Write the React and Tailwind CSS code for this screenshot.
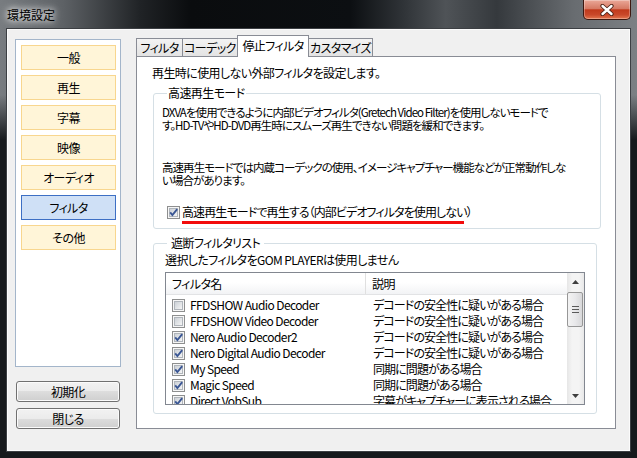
import React from 'react';

const font = "font-['Noto_Sans_CJK_JP','Noto_Sans',sans-serif] [font-feature-settings:'palt']";

function CheckBox({ checked }) {
  return (
    <svg width="13" height="13" viewBox="0 0 13 13" className="shrink-0">
      <defs>
        <linearGradient id="cbfill" x1="0" y1="0" x2="1" y2="1">
          <stop offset="0" stopColor="#c9ced4" />
          <stop offset="1" stopColor="#f7f7f7" />
        </linearGradient>
      </defs>
      <rect x="0.5" y="0.5" width="12" height="12" fill="#f6f6f6" stroke="#8e8f8f" />
      <rect x="2.5" y="2.5" width="8" height="8" fill="url(#cbfill)" stroke="#b0b5bb" />
      {checked && (
        <path d="M3.2 6.4 L5.4 9 L10.2 3.2" fill="none" stroke="#3a5694" strokeWidth="1.9" />
      )}
    </svg>
  );
}

const sideItems = ['一般', '再生', '字幕', '映像', 'オーディオ', 'フィルタ', 'その他'];

const filters = [
  { on: false, name: 'FFDSHOW Audio Decoder', desc: 'デコードの安全性に疑いがある場合' },
  { on: false, name: 'FFDSHOW Video Decoder', desc: 'デコードの安全性に疑いがある場合' },
  { on: true, name: 'Nero Audio Decoder2', desc: 'デコードの安全性に疑いがある場合' },
  { on: true, name: 'Nero Digital Audio Decoder', desc: 'デコードの安全性に疑いがある場合' },
  { on: true, name: 'My Speed', desc: '同期に問題がある場合' },
  { on: true, name: 'Magic Speed', desc: '同期に問題がある場合' },
  { on: true, name: 'Direct VobSub', desc: '字幕がキャプチャーに表示される場合' },
];

export default function App() {
  return (
    <div className={`w-[637px] h-[458px] flex flex-col overflow-hidden text-[12px] leading-[16px] tracking-[-0.6px] text-black ${font} bg-[linear-gradient(to_bottom,rgba(0,0,0,0)_0px,rgba(0,0,0,0)_95px,#16191c_140px),linear-gradient(to_right,#787c80_0%,#5d6165_10%,#202326_22%,#0a0c0e_30%,#0c0f12_55%,#2e3236_63%,#4f5357_70%,#35393d_78%,#686c70_90%,#7c8084_100%)]`}>
      {/* Title bar */}
      <div className="h-[29px] flex items-start shrink-0">
        <div className="pl-[7px] pt-[7px] text-[12px] leading-[16px] tracking-normal [text-shadow:0_0_6px_#fff,0_0_10px_rgba(255,255,255,0.9)]">環境設定</div>
        <div className="flex-1" />
        <div className="mr-[6px] w-[48px] h-[20px] rounded-b-[5px] border border-t-0 border-[#3d1810] bg-[linear-gradient(to_bottom,#eaa898_0%,#d67a64_45%,#c13a1c_52%,#c9482a_78%,#e4774f_100%)] shadow-[inset_0_0_0_1px_rgba(255,255,255,0.3)] flex items-center justify-center">
          <svg width="14" height="12" viewBox="0 0 14 12">
            <path d="M2.5 2 L11.5 10 M11.5 2 L2.5 10" stroke="#4a2216" strokeWidth="4.2" strokeLinecap="round" />
            <path d="M2.5 2 L11.5 10 M11.5 2 L2.5 10" stroke="#ffffff" strokeWidth="2.4" strokeLinecap="round" />
          </svg>
        </div>
      </div>

      {/* Client area */}
      <div className="mx-[7px] mb-[7px] flex-1 min-h-0 border border-[#fbfbfb] outline outline-1 outline-[#3c3f43] bg-[#f0f0f0] flex items-start">
        {/* Left column */}
        <div className="ml-[7px] mt-[9px] flex flex-col">
          <div className="w-[106px] h-[328px] border border-[#a3b5ca] bg-white pt-[5px] pl-[5px] flex flex-col gap-[5px]">
            {sideItems.map((s) => (
              <div
                key={s}
                className={
                  s === 'フィルタ'
                    ? 'w-[95px] h-[25px] border border-[#3d6fc4] bg-[#cfe0f6] flex items-center justify-center'
                    : 'w-[95px] h-[25px] border border-[#f8d68e] bg-[#fff5d8] flex items-center justify-center'
                }
              >
                {s}
              </div>
            ))}
          </div>
          <div className="ml-[1px] mt-[14px] w-[104px] h-[21px] rounded-[3px] border border-[#707070] bg-[linear-gradient(to_bottom,#f2f2f2_0%,#ebebeb_50%,#dddddd_50%,#cfcfcf_100%)] shadow-[inset_0_0_0_1px_#fbfbfb] flex items-center justify-center">初期化</div>
          <div className="ml-[1px] mt-[6px] w-[104px] h-[21px] rounded-[3px] border border-[#707070] bg-[linear-gradient(to_bottom,#f2f2f2_0%,#ebebeb_50%,#dddddd_50%,#cfcfcf_100%)] shadow-[inset_0_0_0_1px_#fbfbfb] flex items-center justify-center">閉じる</div>
        </div>

        {/* Right column: tabs */}
        <div className="ml-[15px] mt-[5px] flex flex-col">
          <div className="h-[21px] flex items-end whitespace-nowrap">
            <div className="w-[47px] h-[18px] border border-b-0 border-[#898c95] bg-[linear-gradient(to_bottom,#f3f3f3,#e3e3e3)] flex items-center justify-center">フィルタ</div>
            <div className="-ml-px w-[56px] h-[18px] border border-b-0 border-[#898c95] bg-[linear-gradient(to_bottom,#f3f3f3,#e3e3e3)] flex items-center justify-center">コーデック</div>
            <div className="-ml-px relative z-10 -mb-px w-[72px] h-[22px] border border-b-0 border-[#898c95] bg-white flex items-center justify-center pb-[2px]">停止フィルタ</div>
            <div className="-ml-px w-[65px] h-[18px] border border-b-0 border-[#898c95] bg-[linear-gradient(to_bottom,#f3f3f3,#e3e3e3)] flex items-center justify-center">カスタマイズ</div>
          </div>

          <div className="w-[480px] h-[373px] border border-[#898c95] bg-white flex flex-col">
            <div className="ml-[15px] mt-[8px] whitespace-nowrap">再生時に使用しない外部フィルタを設定します。</div>

            {/* Group 1 */}
            <fieldset className="ml-[16px] mt-[5px] w-[448px] border border-[#d5dfe5] rounded-[3px] px-[8px] pb-[4px]">
              <legend className="ml-[5px] px-[1px] leading-[14px]">高速再生モード</legend>
              <div className="mt-[6px] text-[11.5px] leading-[13px] tracking-[-0.95px] whitespace-nowrap">
                <div>DXVAを使用できるように内部ビデオフィルタ(Gretech Video Filter)を使用しないモードで</div>
                <div>す。HD-TVやHD-DVD再生時にスムーズ再生できない問題を緩和できます。</div>
              </div>
              <div className="mt-[29px] text-[11.5px] leading-[13px] tracking-[-0.95px] whitespace-nowrap">
                <div>高速再生モードでは内蔵コーデックの使用、イメージキャプチャー機能などが正常動作しな</div>
                <div>い場合があります。</div>
              </div>
              <div className="mt-[17px] ml-[5px] h-[16px] flex items-center gap-[2px] whitespace-nowrap tracking-[-0.9px]">
                <CheckBox checked />
                <span>高速再生モードで再生する（内部ビデオフィルタを使用しない）</span>
              </div>
              <div className="ml-[20px] mt-[1px] w-[282px] h-[3px] bg-[#f20c0c]" />
            </fieldset>

            {/* Group 2 */}
            <fieldset className="ml-[16px] mt-[7px] w-[444px] border border-[#d5dfe5] rounded-[3px] px-[11px] pb-[8px]">
              <legend className="ml-[2px] px-[4px] leading-[14px]">遮断フィルタリスト</legend>
              <div className="mt-[2px] whitespace-nowrap">選択したフィルタをGOM PLAYERは使用しません</div>
              <div className="mt-[4px] w-[420px] h-[133px] border border-[#828790] bg-white flex">
                <div className="w-[401px] flex flex-col overflow-hidden">
                  <div className="h-[22px] shrink-0 flex border-b border-[#e2e3e5] bg-[linear-gradient(to_bottom,#ffffff_0%,#ffffff_45%,#f2f3f5_100%)]">
                    <div className="w-[200px] pl-[6px] border-r border-[#e0e0e0] flex items-center">フィルタ名</div>
                    <div className="pl-[6px] flex items-center">説明</div>
                  </div>
                  <div className="pt-[2px] flex flex-col">
                    {filters.map((f) => (
                      <div key={f.name} className="h-[16px] shrink-0 flex items-center whitespace-nowrap">
                        <div className="w-[200px] pl-[6px] flex items-center gap-[5px]">
                          <CheckBox checked={f.on} />
                          <span>{f.name}</span>
                        </div>
                        <div className="pl-[7px] tracking-[-0.9px]">{f.desc}</div>
                      </div>
                    ))}
                  </div>
                </div>

                {/* Scrollbar */}
                <div className="w-[17px] flex flex-col bg-[linear-gradient(to_right,#e6e6e6,#f4f4f4_30%,#f4f4f4_70%,#e8e8e8)]">
                  <div className="h-[17px] flex items-center justify-center">
                    <svg width="7" height="4" viewBox="0 0 7 4"><path d="M0 4 L3.5 0 L7 4 Z" fill="#3f3f3f" /></svg>
                  </div>
                  <div className="flex-1 pt-[2px]">
                    <div className="w-[16px] h-[35px] rounded-[2px] border border-[#979797] bg-[linear-gradient(to_right,#f3f3f3,#e9e9eb_50%,#d8d8da)] flex flex-col items-center justify-center gap-[2px]">
                      <div className="w-[7px] h-px bg-[#5a5a5a]" />
                      <div className="w-[7px] h-px bg-[#5a5a5a]" />
                      <div className="w-[7px] h-px bg-[#5a5a5a]" />
                    </div>
                  </div>
                  <div className="h-[17px] flex items-center justify-center">
                    <svg width="7" height="4" viewBox="0 0 7 4"><path d="M0 0 L3.5 4 L7 0 Z" fill="#3f3f3f" /></svg>
                  </div>
                </div>
              </div>
            </fieldset>
          </div>
        </div>
      </div>
    </div>
  );
}
